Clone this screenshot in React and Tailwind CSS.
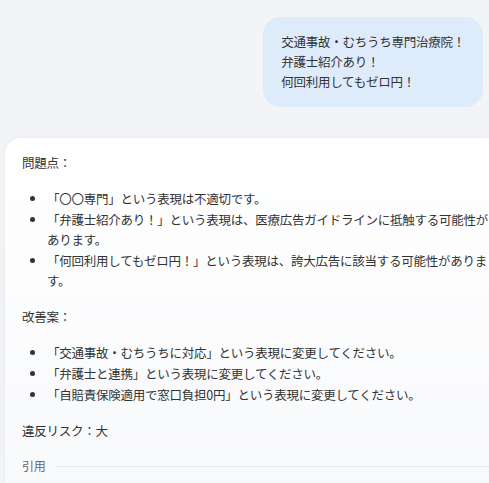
export default function App() {
  const font = "font-['Noto_Sans_CJK_JP','Noto_Sans',sans-serif]";
  return (
    <div className={`min-h-screen bg-[#f3f4f7] text-[12.5px] leading-5 tracking-[-0.25px] text-[#333] ${font}`}>
      <div className="flex flex-col pt-[17px]">
        <div className="flex justify-end pr-[6px]">
          <div className="rounded-[18px] bg-[#deebfb] px-[18px] pt-[15px] pb-[15px] leading-5">
            <div>交通事故・むちうち専門治療院！</div>
            <div>弁護士紹介あり！</div>
            <div>何回利用してもゼロ円！</div>
          </div>
        </div>
        <div className="mt-[31px] ml-[5px] rounded-tl-[16px] bg-gradient-to-b from-white to-[#f8f9fb] pl-[17px] pr-0 pt-[15px] pb-[10px] shadow-[0_0_6px_rgba(0,0,0,0.05)]">
          <div className="flex flex-col gap-4">
            <p>問題点：</p>
            <ul className="list-disc pl-[25px] space-y-px">
              <li>「〇〇専門」という表現は不適切です。</li>
              <li>「弁護士紹介あり！」という表現は、医療広告ガイドラインに抵触する可能性があります。</li>
              <li>「何回利用してもゼロ円！」という表現は、誇大広告に該当する可能性があります。</li>
            </ul>
            <p>改善案：</p>
            <ul className="list-disc pl-[25px] space-y-px">
              <li>「交通事故・むちうちに対応」という表現に変更してください。</li>
              <li>「弁護士と連携」という表現に変更してください。</li>
              <li>「自賠責保険適用で窓口負担0円」という表現に変更してください。</li>
            </ul>
            <p>違反リスク：大</p>
            <div className="flex items-center gap-[10px] -mt-px">
              <span className="text-[12px] text-[#666]">引用</span>
              <div className="h-px flex-1 bg-[#e6e8ec]"></div>
            </div>
          </div>
        </div>
      </div>
    </div>
  );
}
